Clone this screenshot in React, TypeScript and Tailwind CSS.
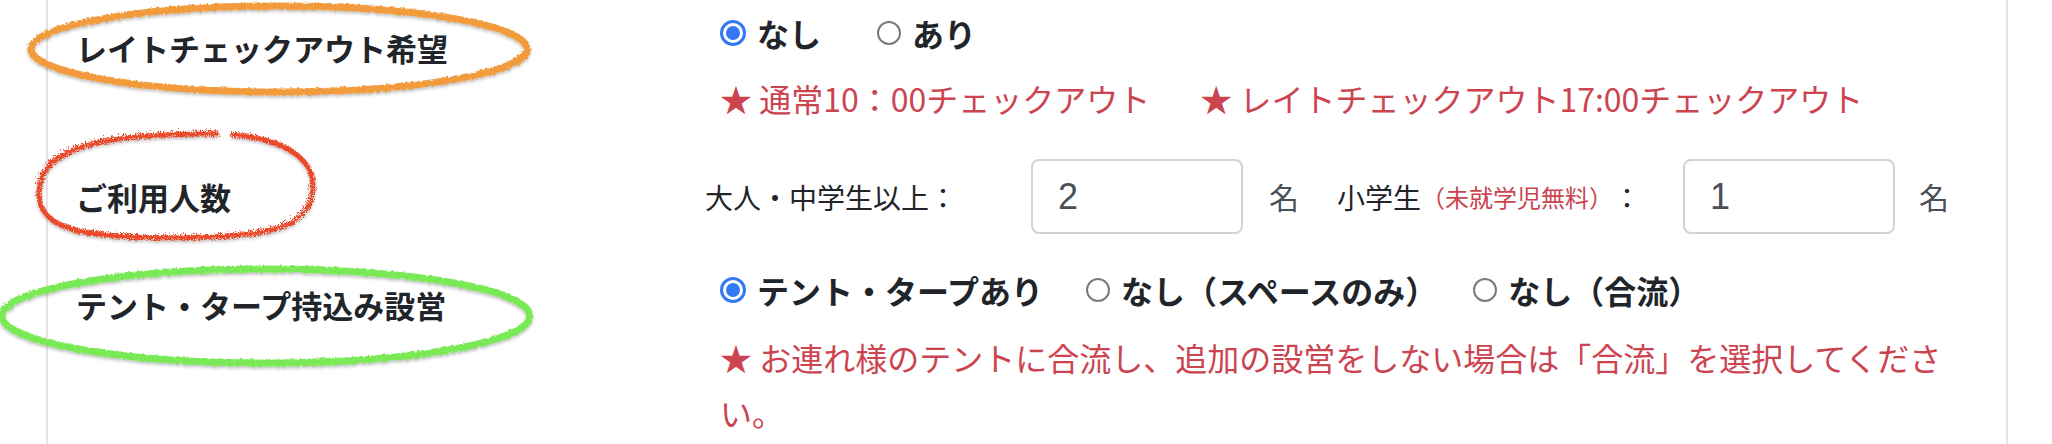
const Radio = ({ checked }: { checked?: boolean }) =>
  checked ? (
    <span className="flex h-[26px] w-[26px] shrink-0 items-center justify-center rounded-full border-[3px] border-[#3478f6] bg-white">
      <span className="h-[14px] w-[14px] rounded-full bg-[#3478f6]" />
    </span>
  ) : (
    <span className="h-[24px] w-[24px] shrink-0 rounded-full border-2 border-[#7a7a7a] bg-white" />
  );

const Option = ({ label, checked, className }: { label: string; checked?: boolean; className?: string }) => (
  <label className={`flex items-center gap-[11px] ${className ?? ""}`}>
    <Radio checked={checked} />
    <span>{label}</span>
  </label>
);

const Marks = () => (
  <svg className="pointer-events-none absolute left-0 top-0" width="2052" height="444">
    <defs>
      <filter id="crayon" x="-10%" y="-10%" width="120%" height="120%">
        <feTurbulence type="fractalNoise" baseFrequency="0.35" numOctaves="2" result="n" />
        <feDisplacementMap in="SourceGraphic" in2="n" scale="4" />
        <feDropShadow dx="0" dy="2" stdDeviation="1.5" floodColor="#000" floodOpacity="0.25" />
      </filter>
      <filter id="scribble" x="-10%" y="-10%" width="120%" height="120%">
        <feTurbulence type="turbulence" baseFrequency="0.6" numOctaves="1" result="n" />
        <feDisplacementMap in="SourceGraphic" in2="n" scale="8" />
        <feDropShadow dx="0" dy="2" stdDeviation="1.5" floodColor="#000" floodOpacity="0.25" />
      </filter>
    </defs>
    <ellipse cx="279" cy="49" rx="248" ry="43" fill="none" stroke="#f29b3c" strokeWidth="7" filter="url(#crayon)" />
    <path
      d="M228 132 C288 136 312 160 310 186 C308 226 262 235 172 235 C82 235 36 228 36 190 C36 150 82 130 216 131"
      fill="none"
      stroke="#ea4a2c"
      strokeWidth="5"
      filter="url(#scribble)"
    />
    <ellipse cx="266" cy="316" rx="264" ry="47" fill="none" stroke="#79ea57" strokeWidth="7" filter="url(#crayon)" />
  </svg>
);

export default function App() {
  return (
    <div className="relative h-[444px] w-[2052px] overflow-hidden bg-white font-['Noto_Sans_CJK_JP',sans-serif] text-[#212529]">
      <div className="ml-[46px] h-full w-[1962px] border-x-2 border-[#e4e4e4]">
        {/* late checkout */}
        <div className="flex">
          <div className="w-[672px] shrink-0 pl-[28px] pt-[29px] text-[31px] font-bold leading-[38px]">
            レイトチェックアウト希望
          </div>
          <div className="flex flex-col">
            <div className="mt-[13px] flex h-[40px] items-center gap-[56px] text-[32px] font-bold">
              <Option label="なし" checked />
              <Option label="あり" />
            </div>
            <div className="mt-[23px] flex h-[44px] items-center text-[32px] text-[#cc4450]">
              <span>★ 通常10：00チェックアウト</span>
              <span className="ml-[50px]">★ レイトチェックアウト17:00チェックアウト</span>
            </div>
          </div>
        </div>

        {/* guests */}
        <div className="mt-[39px] flex h-[75px] items-center">
          <div className="w-[672px] shrink-0 pl-[28px] text-[31px] font-bold leading-[38px]">ご利用人数</div>
          <div className="-ml-[15px] flex items-center text-[28px]">
            <span className="w-[326px]">大人・中学生以上：</span>
            <div className="flex h-[75px] w-[212px] items-center rounded-[8px] border-2 border-[#ced4da] pl-[25px] font-['Liberation_Sans',sans-serif] text-[36px] text-[#495057]">
              2
            </div>
            <span className="ml-[26px] text-[30px] text-[#495057]">名</span>
            <span className="ml-[38px]">小学生</span>
            <span className="text-[24px] text-[#cc4450]">（未就学児無料）</span>
            <span className="w-[70px]">：</span>
            <div className="flex h-[75px] w-[212px] items-center rounded-[8px] border-2 border-[#ced4da] pl-[25px] font-['Liberation_Sans',sans-serif] text-[36px] text-[#495057]">
              1
            </div>
            <span className="ml-[24px] text-[30px] text-[#495057]">名</span>
          </div>
        </div>

        {/* tent */}
        <div className="mt-[36px] flex">
          <div className="w-[672px] shrink-0 pl-[28px] pt-[16px] text-[31px] font-bold leading-[38px]">
            テント・タープ持込み設営
          </div>
          <div className="flex flex-col">
            <div className="flex h-[40px] items-center text-[32px] font-bold">
              <Option label="テント・タープあり" checked />
              <Option label="なし（スペースのみ）" className="ml-[43px]" />
              <Option label="なし（合流）" className="ml-[36px]" />
            </div>
            <p className="mt-[20px] w-[1240px] text-[32px] leading-[55px] text-[#cc4450]">
              ★ お連れ様のテントに合流し、追加の設営をしない場合は「合流」を選択してください。
            </p>
          </div>
        </div>
      </div>
      <Marks />
    </div>
  );
}
